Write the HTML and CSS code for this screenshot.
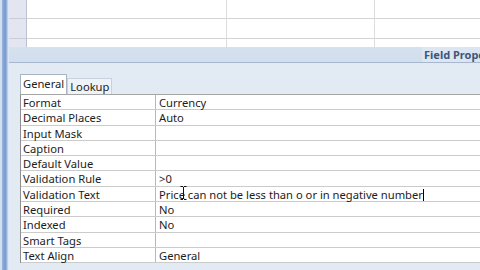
FILE: index.html
```html
<!DOCTYPE html>
<html>
<head>
<meta charset="utf-8">
<link rel="stylesheet" href="styles.css">
</head>
<body>
<div class="app">
  <div class="navbar"></div>
  <div class="main">
    <div class="datasheet">
      <div class="sel"></div><div class="cell"></div><div class="cell"></div><div class="cell last"></div>
      <div class="sel"></div><div class="cell"></div><div class="cell"></div><div class="cell last"></div>
      <div class="sel end"></div><div class="cell end"></div><div class="cell end"></div><div class="cell last end"></div>
    </div>
    <div class="band"><span class="band-title">Field Properties</span></div>
    <div class="panel">
      <div class="tabs">
        <div class="tab active">General</div>
        <div class="tab">Lookup</div>
      </div>
      <div class="props">
        <div class="row"><div class="label">Format</div><div class="value">Currency</div></div>
        <div class="row"><div class="label">Decimal Places</div><div class="value">Auto</div></div>
        <div class="row"><div class="label">Input Mask</div><div class="value"></div></div>
        <div class="row"><div class="label">Caption</div><div class="value"></div></div>
        <div class="row"><div class="label">Default Value</div><div class="value"></div></div>
        <div class="row"><div class="label">Validation Rule</div><div class="value">&gt;0</div></div>
        <div class="row"><div class="label">Validation Text</div><div class="value editing">Price can not be less than o or in negative number<span class="caret"></span><svg class="ibeam" width="7" height="14" viewBox="0 0 7 14"><path d="M0.5 0.5h2.5M4 0.5h2.5M3.5 1v12M0.5 13.5h2.5M4 13.5h2.5" stroke="#111" stroke-width="1" fill="none"/></svg></div></div>
        <div class="row"><div class="label">Required</div><div class="value">No</div></div>
        <div class="row"><div class="label">Indexed</div><div class="value">No</div></div>
        <div class="row"><div class="label">Smart Tags</div><div class="value"></div></div>
        <div class="row"><div class="label">Text Align</div><div class="value">General</div></div>
      </div>
    </div>
  </div>
</div>
</body>
</html>
```
FILE: styles.css
```css
* { box-sizing: border-box; }
html, body { margin: 0; padding: 0; }
body {
  width: 480px;
  height: 270px;
  overflow: hidden;
  background: #e3ebf5;
  font-family: "Noto Sans", "Open Sans", sans-serif;
  font-size: 11.2px;
  color: #1c1c1c;
}
.app { display: flex; height: 270px; }
.navbar {
  width: 9px;
  flex: none;
  background: linear-gradient(to right, #d2def0 0, #d2def0 2px, #9cb9e0 2px, #7c9fd0 4px, #7c9fd0 6px, #a9c1e4 7px, #cfdcee 8px, #e9eef7 9px);
}
.main { flex: 1; display: flex; flex-direction: column; min-width: 0; }
.datasheet {
  display: grid;
  grid-template-columns: 18px 200px 148px 1fr;
  grid-template-rows: 19px 20px 8px;
  height: 47px;
  background: #fff;
}
.sel { background: #e3e6f1; border-right: 1px solid #bcc2d2; border-bottom: 1px solid #c9cdd8; }
.cell { border-right: 1px solid #dcdcdc; border-bottom: 1px solid #d4d4d4; }
.cell.last { border-right: none; }
.end { border-bottom: none; }
.band {
  height: 16px;
  background: linear-gradient(#d6e1ef, #d2deed);
  border-bottom: 1px solid #a7b7cd;
  padding-left: 413px;
  white-space: nowrap;
  overflow: hidden;
}
.band-title {
  font-weight: bold;
  color: #3d5679;
  font-size: 11px;
  line-height: 15px;
  background: linear-gradient(to right, #dde7f3, #dae4f1);
  padding-left: 2px;
}
.panel {
  flex: 1;
  padding: 11px 0 0 11px;
  background: #e2eaf4;
}
.tabs { display: flex; align-items: flex-end; height: 20px; }
.tab {
  height: 16px;
  padding: 0 2px;
  line-height: 15px;
  background: #eef3f9;
  border: 1px solid #c8d2df;
  border-bottom: none;
}
.tab.active {
  height: 20px;
  line-height: 17px;
  background: #fff;
  border-color: #a9b4c3;
  padding: 0 2px 0 2px;
}
.props {
  background: #fff;
  border-top: 1px solid #a5a5a5;
  border-left: 1px solid #8f8f8f;
}
.row {
  display: flex;
  height: 15.3px;
  border-bottom: 1px solid #cbcbcb;
}
.label {
  width: 135px;
  flex: none;
  padding-left: 2px;
  border-right: 1px solid #b8b8b8;
  line-height: 15px;
  white-space: nowrap;
}
.value {
  flex: 1;
  padding-left: 3px;
  line-height: 15px;
  white-space: nowrap;
  position: relative;
}
.caret {
  display: inline-block;
  width: 1px;
  height: 12px;
  background: #000;
  vertical-align: -2px;
}
.ibeam {
  position: absolute;
  left: 24px;
  top: -1px;
}
```
